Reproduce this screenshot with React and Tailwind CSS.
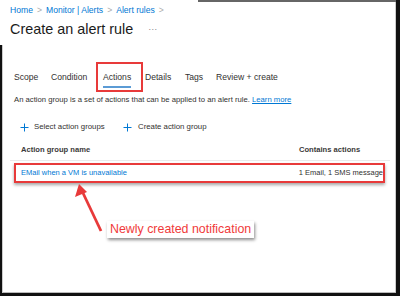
import React from "react";

export default function App() {
  const font = { fontFamily: '"Liberation Sans", Arial, sans-serif' };
  return (
    <div className="relative w-[400px] h-[296px] bg-white overflow-hidden whitespace-nowrap" style={font}>
      {/* screenshot frame edges */}
      <div className="absolute left-[198px] right-0 top-0 h-[2px] bg-[#666]" />
      <div className="absolute right-0 top-0 bottom-0 w-[4px] bg-[#111]" />
      <div className="absolute right-[4px] top-[2px] bottom-[3px] w-[1px] bg-[#ccc]" />
      <div className="absolute left-0 right-0 bottom-0 h-[3px] bg-[#111]" />
      <div className="absolute left-[2px] right-[4px] bottom-[3px] h-[1px] bg-[#bbb]" />
      <div className="absolute left-0 top-[45px] bottom-0 w-[2px] bg-[#111]" />
      <div className="absolute left-[2px] top-[45px] bottom-[3px] w-[1px] bg-[#ccc]" />

      <div className="flex flex-col pl-[10px] pt-[4px]">
        <div className="flex items-center gap-[4px] text-[8.6px] text-[#0078d4] h-[12px]">
          <span>Home</span>
          <span className="text-[#aaa]">&gt;</span>
          <span>Monitor | Alerts</span>
          <span className="text-[#aaa]">&gt;</span>
          <span>Alert rules</span>
          <span className="text-[#aaa]">&gt;</span>
        </div>
        <div className="flex items-center h-[20px] mt-[3px]">
          <span className="text-[14.4px] text-[#1b1b1b] leading-none">Create an alert rule</span>
          <span className="ml-[15px] text-[9px] text-[#888] leading-none">···</span>
        </div>

        <div className="flex items-center text-[8.6px] text-[#323130] mt-[32px] pl-[4px] h-[12px]">
          <span className="w-[37px]">Scope</span>
          <span className="w-[52px]">Condition</span>
          <span className="relative w-[42px]">
            Actions
            <span className="absolute left-0 w-[28px] -bottom-[5px] h-[2px] bg-[#5b9bd5]" />
            <span className="absolute -left-[7px] w-[47px] -top-[9px] h-[30px] border-2 border-[#e83a3a]" />
          </span>
          <span className="w-[40px]">Details</span>
          <span className="w-[31px]">Tags</span>
          <span>Review + create</span>
        </div>

        <div className="text-[7.7px] text-[#323130] mt-[12px] pl-[4px] h-[10px] leading-[10px]">
          An action group is a set of actions that can be applied to an alert rule.{" "}
          <span className="text-[#0078d4] underline">Learn more</span>
        </div>

        <div className="flex items-center text-[7.8px] text-[#323130] mt-[16px] pl-[10px] h-[12px]">
          <span className="flex items-center w-[103px]">
            <svg width="9" height="9" viewBox="0 0 9 9" className="mr-[5px]">
              <path d="M4.5 0.5v8M0.5 4.5h8" stroke="#0078d4" strokeWidth="1" />
            </svg>
            Select action groups
          </span>
          <span className="flex items-center">
            <svg width="9" height="9" viewBox="0 0 9 9" className="mr-[6px]">
              <path d="M4.5 0.5v8M0.5 4.5h8" stroke="#0078d4" strokeWidth="1" />
            </svg>
            Create action group
          </span>
        </div>

        <div className="flex items-center text-[7.6px] font-bold text-[#3b3a39] mt-[6px] pl-[11px] h-[22px] mr-[10px] border-b border-[#eaeaea]">
          <span className="w-[278px]">Action group name</span>
          <span>Contains actions</span>
        </div>

        <div className="flex items-center text-[7.5px] h-[20px] pl-[5px] ml-[4px] w-[371px] mt-[2px] border-2 border-[#e83a3a] shadow-[0_2px_3px_rgba(0,0,0,0.35)]">
          <span className="w-[278px] text-[#0078d4]">EMail when a VM is unavailable</span>
          <span className="text-[#323130]">1 Email, 1 SMS message</span>
        </div>
      </div>

      {/* arrow */}
      <svg className="absolute left-0 top-0" width="400" height="296" viewBox="0 0 400 296">
        <line x1="101" y1="231" x2="83" y2="193" stroke="#e83a3a" strokeWidth="2.8" />
        <polygon points="79,184 75,197 87,192" fill="#e83a3a" />
      </svg>

      <div className="absolute left-[107px] top-[221px] bg-white px-[3px] text-[12.4px] leading-[17px] text-[#f03a3a] shadow-[1px_2px_3px_rgba(0,0,0,0.45)]">
        Newly created notification
      </div>
    </div>
  );
}
